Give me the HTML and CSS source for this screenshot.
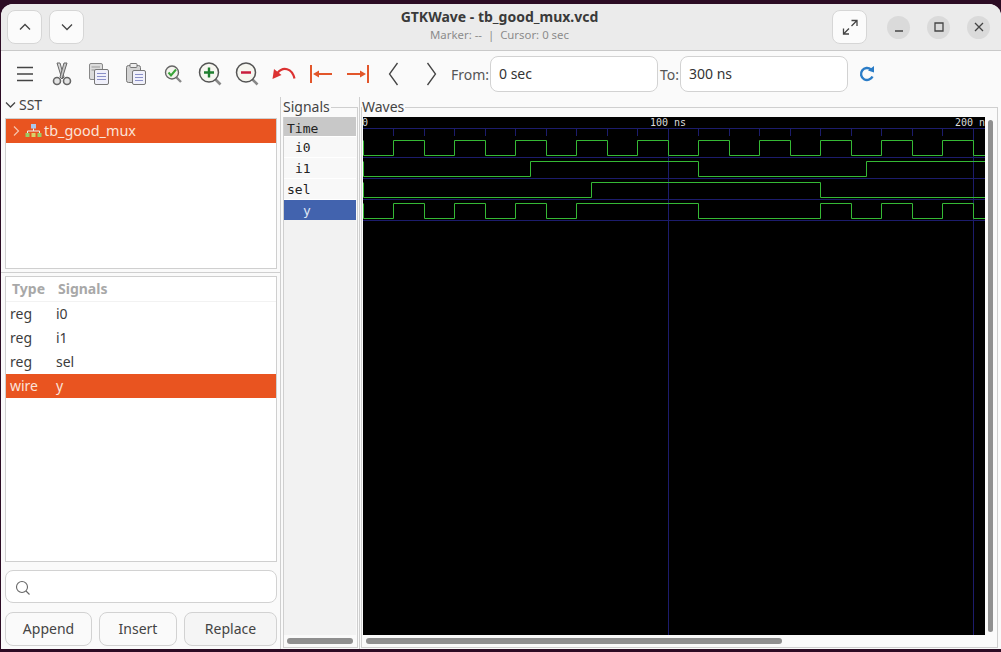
FILE: index.html

```html
<!DOCTYPE html>
<html>
<head>
  <title>GTKWave - tb_good_mux.vcd</title>
  <link rel="stylesheet" href="styles.css">
</head>
<body>
  <div class="window">
    <!-- title bar -->
    <header class="titlebar">
      <div class="title-left">
        <button class="head-btn">
          <svg width="14" height="14" viewBox="0 0 14 14"><path class="line" d="M2 9.5 L7 4.5 L12 9.5"/></svg>
        </button>
        <button class="head-btn">
          <svg width="14" height="14" viewBox="0 0 14 14"><path class="line" d="M2 4.5 L7 9.5 L12 4.5"/></svg>
        </button>
      </div>
      <div class="title-center">
        <div class="title-main">GTKWave - tb_good_mux.vcd</div>
        <div class="title-sub">Marker: -- &nbsp;|&nbsp; Cursor: 0 sec</div>
      </div>
      <div class="title-right">
        <button class="head-btn expand-btn">
          <svg width="18" height="18" viewBox="0 0 18 18"><path class="line" d="M10.5 2.5 H16 V8 M16 2.5 L10.5 8 M2.5 10.5 V16 H8 M2.5 16 L8 10.5"/></svg>
        </button>
        <div class="win-btn">
          <svg width="12" height="12" viewBox="0 0 12 12"><path class="line" d="M2 10 H10"/></svg>
        </div>
        <div class="win-btn">
          <svg width="12" height="12" viewBox="0 0 12 12"><path class="line" d="M2 2 H10 V10 H2 Z"/></svg>
        </div>
        <div class="win-btn">
          <svg width="12" height="12" viewBox="0 0 12 12"><path class="line" d="M2 2 L10 10 M10 2 L2 10"/></svg>
        </div>
      </div>
    </header>

    <!-- toolbar -->
    <div class="toolbar">
      <div class="tool">
        <svg width="24" height="24" viewBox="0 0 24 24"><path class="line" d="M4 5.5 H20 M4 12 H20 M4 18.5 H20"/></svg>
      </div>
      <div class="tool">
        <svg width="24" height="24" viewBox="0 0 24 24">
          <path d="M7 1 L10 1 L14 15 L12 17 Z" fill="#d8d8d8" stroke="#666"/>
          <path d="M17 1 L14 1 L10 15 L12 17 Z" fill="#c8c8c8" stroke="#666"/>
          <circle cx="7" cy="19" r="3.5" fill="#e4e4e4" stroke="#666" stroke-width="1.6"/>
          <circle cx="17" cy="19" r="3.5" fill="#e4e4e4" stroke="#666" stroke-width="1.6"/>
        </svg>
      </div>
      <div class="tool">
        <svg width="24" height="24" viewBox="0 0 24 24">
          <rect x="2.5" y="1.5" width="13" height="16" rx="1.5" fill="#dcdcdc" stroke="#888"/>
          <path d="M4.5 5 H13 M4.5 8 H8" stroke="#999"/>
          <rect x="7.5" y="7.5" width="14" height="15" rx="1.5" fill="#f0f0fa" stroke="#777"/>
          <path d="M10 11.5 H19 M10 14.5 H19 M10 17.5 H19" stroke="#8a90c8"/>
        </svg>
      </div>
      <div class="tool">
        <svg width="24" height="24" viewBox="0 0 24 24">
          <rect x="2.5" y="3.5" width="14" height="17" rx="2" fill="#d4d4d4" stroke="#777"/>
          <rect x="6" y="1.5" width="7" height="4" rx="1" fill="#eee" stroke="#777"/>
          <rect x="8.5" y="8.5" width="13" height="14" rx="1.5" fill="#f0f0fa" stroke="#777"/>
          <path d="M11 12.5 H19 M11 15.5 H19 M11 18.5 H19" stroke="#8a90c8"/>
        </svg>
      </div>
      <div class="tool">
        <svg width="24" height="24" viewBox="0 0 24 24">
          <path d="M15.5 15.5 L20 20" stroke="#888" stroke-width="2.4"/>
          <circle cx="11" cy="10.5" r="6.5" fill="#f4f4ee" stroke="#666" stroke-width="1.4"/>
          <path d="M7.5 10.5 L10 13.5 L15 7.5" fill="none" stroke="#3aa53a" stroke-width="2"/>
        </svg>
      </div>
      <div class="tool">
        <svg width="24" height="24" viewBox="0 0 24 24">
          <path d="M17 17 L22.5 22.5" stroke="#888" stroke-width="2.6"/>
          <circle cx="11" cy="10.5" r="9.5" fill="#f6f6f0" stroke="#555" stroke-width="1.5"/>
          <path d="M11 5.5 V15.5 M6 10.5 H16" stroke="#1f7f2f" stroke-width="2.4"/>
        </svg>
      </div>
      <div class="tool">
        <svg width="24" height="24" viewBox="0 0 24 24">
          <path d="M17 17 L22.5 22.5" stroke="#888" stroke-width="2.6"/>
          <circle cx="11" cy="10.5" r="9.5" fill="#f6f6f0" stroke="#555" stroke-width="1.5"/>
          <path d="M6 10.5 H16" stroke="#c81e3c" stroke-width="2.4"/>
        </svg>
      </div>
      <div class="tool">
        <svg width="24" height="24" viewBox="0 0 24 24">
          <path d="M22.5 16.5 C20 6 11 4 5.5 11" fill="none" stroke="#dc3232" stroke-width="2.2"/>
          <path d="M0.5 17 L2 7 L9.5 13 Z" fill="#dc3232"/>
        </svg>
      </div>
      <div class="tool">
        <svg width="24" height="24" viewBox="0 0 24 24">
          <path d="M2 3 V21" stroke="#e2562a" stroke-width="2"/>
          <path d="M8 12 H23" stroke="#e2562a" stroke-width="2"/>
          <path d="M4 12 L10 8.5 V15.5 Z" fill="#e2562a"/>
        </svg>
      </div>
      <div class="tool">
        <svg width="24" height="24" viewBox="0 0 24 24">
          <path d="M22 3 V21" stroke="#e2562a" stroke-width="2"/>
          <path d="M1 12 H16" stroke="#e2562a" stroke-width="2"/>
          <path d="M20 12 L14 8.5 V15.5 Z" fill="#e2562a"/>
        </svg>
      </div>
      <div class="tool">
        <svg width="24" height="24" viewBox="0 0 24 24"><path class="line" d="M14.5 1 L6.5 12 L14.5 23"/></svg>
      </div>
      <div class="tool">
        <svg width="24" height="24" viewBox="0 0 24 24"><path class="line" d="M7.5 1 L15.5 12 L7.5 23"/></svg>
      </div>
      <span class="range-label from-label">From:</span>
      <div class="range-input">0 sec</div>
      <span class="range-label to-label">To:</span>
      <div class="range-input">300 ns</div>
      <div class="reload">
        <svg width="18" height="18" viewBox="0 0 18 18">
          <path d="M14.5 11.5 A6 6 0 1 1 13 4.5" fill="none" stroke="#2a7cc7" stroke-width="2.4"/>
          <path d="M10 5.5 L16 7.5 L16 1 Z" fill="#2a7cc7"/>
        </svg>
      </div>
    </div>

    <div class="main">
      <!-- left pane -->
      <div class="left">
        <div class="sst-label">
          <svg width="11" height="11" viewBox="0 0 11 11"><path class="line" d="M1 3.5 L5.5 8 L10 3.5"/></svg>
          <span>SST</span>
        </div>
        <div class="tree-box">
          <div class="tree-row">
            <svg width="10" height="12" viewBox="0 0 10 12"><path d="M3 1.5 L7.5 6 L3 10.5" fill="none" stroke="#f6c4ae" stroke-width="1.2"/></svg>
            <svg class="tree-icon" width="17" height="14" viewBox="0 0 17 14">
              <rect x="6" y="0" width="5" height="4.5" fill="#a9c8ec"/>
              <path d="M8.5 4.5 V7 M2.5 9 V7 H14.5 V9" fill="none" stroke="#eee"/>
              <rect x="0.5" y="9" width="4" height="4" fill="#9ccc65"/>
              <rect x="6.5" y="9" width="4" height="4" fill="#d9d36a"/>
              <rect x="12.5" y="9" width="4" height="4" fill="#9ccc65"/>
            </svg>
            <span>tb_good_mux</span>
          </div>
        </div>
        <div class="pane-line"></div>
        <div class="signal-box">
          <div class="signal-head">
            <span class="col-type">Type</span>
            <span class="col-name">Signals</span>
          </div>
          <div class="signal-row"><span class="col-type">reg</span><span class="col-name">i0</span></div>
          <div class="signal-row"><span class="col-type">reg</span><span class="col-name">i1</span></div>
          <div class="signal-row"><span class="col-type">reg</span><span class="col-name">sel</span></div>
          <div class="signal-row selected"><span class="col-type">wire</span><span class="col-name">y</span></div>
        </div>
        <div class="search">
          <svg width="16" height="16" viewBox="0 0 16 16">
            <circle cx="7" cy="7" r="5.5" fill="none" stroke="#666" stroke-width="1.1"/>
            <path d="M11 11 L14.5 14.5" stroke="#666" stroke-width="1.1"/>
          </svg>
        </div>
        <div class="actions">
          <button class="action append">Append</button>
          <button class="action insert">Insert</button>
          <button class="action replace">Replace</button>
        </div>
      </div>

      <!-- signal names -->
      <fieldset class="frame signals-frame">
        <legend>Signals</legend>
        <div class="signals-inner">
          <div class="names">
            <div class="name name-time">Time</div>
            <div class="name indent-1">i0</div>
            <div class="name indent-1">i1</div>
            <div class="name">sel</div>
            <div class="name name-selected indent-2">y</div>
          </div>
          <div class="hscroll names-scroll"></div>
        </div>
      </fieldset>

      <div class="pane-divider"></div>

      <!-- waveforms -->
      <fieldset class="frame waves-frame">
        <legend>Waves</legend>
        <div class="waves-inner">
          <div class="waves-top">
            <svg class="canvas" width="622" height="518" viewBox="0 0 622 518">
              <g class="grid">
                <path d="M0 11.5 H622 M0 40.5 H622 M0 61.5 H622 M0 82.5 H622 M0 103.5 H622"/>
                <path d="M305.5 11 V518 M610.5 11 V518"/>
                <path d="M30.5 11 V19 M61.5 11 V19 M91.5 11 V19 M122.5 11 V19 M152.5 11 V19 M183.5 11 V19 M213.5 11 V19 M244.5 11 V19 M274.5 11 V19 M335.5 11 V19 M366.5 11 V19 M396.5 11 V19 M427.5 11 V19 M457.5 11 V19 M488.5 11 V19 M518.5 11 V19 M549.5 11 V19 M579.5 11 V19"/>
              </g>
              <g class="trace">
                <path d="M0.5 23.5 V38.5 H30.5 V23.5 H61.5 V38.5 H91.5 V23.5 H122.5 V38.5 H152.5 V23.5 H183.5 V38.5 H213.5 V23.5 H244.5 V38.5 H274.5 V23.5 H305.5 V38.5 H335.5 V23.5 H366.5 V38.5 H396.5 V23.5 H427.5 V38.5 H457.5 V23.5 H488.5 V38.5 H518.5 V23.5 H549.5 V38.5 H579.5 V23.5 H610.5 V38.5 H622"/>
                <path d="M0.5 44.5 V59.5 H167.5 V44.5 H335.5 V59.5 H503.5 V44.5 H622"/>
                <path d="M0.5 65.5 V80.5 H228.5 V65.5 H457.5 V80.5 H622"/>
                <path d="M0.5 86.5 V101.5 H30.5 V86.5 H61.5 V101.5 H91.5 V86.5 H122.5 V101.5 H152.5 V86.5 H183.5 V101.5 H213.5 V86.5 H335.5 V101.5 H457.5 V86.5 H488.5 V101.5 H518.5 V86.5 H549.5 V101.5 H579.5 V86.5 H610.5 V101.5 H622"/>
              </g>
              <g class="ticks">
                <text x="-1" y="9">0</text>
                <text x="287" y="9">100 ns</text>
                <text x="592" y="9">200 n</text>
              </g>
            </svg>
            <div class="vtrack"><div class="vthumb"></div></div>
          </div>
          <div class="hscroll waves-scroll"></div>
        </div>
      </fieldset>
    </div>
  </div>
</body>
</html>
```

FILE: styles.css

```css
* {
  box-sizing: border-box;
}

html, body {
  margin: 0;
  height: 652px;
  overflow: hidden;
}

body {
  background: #2c0c24;
  font-family: "Noto Sans", sans-serif;
  color: #3d3d3d;
}

button {
  font-family: inherit;
  padding: 0;
}

.line {
  fill: none;
  stroke: #444;
  stroke-width: 1.3;
}

.window {
  margin: 4px 0 0 1px;
  height: 645px;
  background: #fafafa;
  border-radius: 12px 12px 0 0;
  display: flex;
  flex-direction: column;
  overflow: hidden;
}

/* title bar */
.titlebar {
  height: 47px;
  flex: none;
  background: #ebebeb;
  border-bottom: 1px solid #c9c9c9;
  display: grid;
  grid-template-columns: 1fr auto 1fr;
  align-items: center;
  padding: 0 11px 0 6px;
}

.title-left {
  display: flex;
  gap: 7px;
}

.title-center {
  text-align: center;
  margin: 0 0 5px 2px;
}

.title-main {
  font-size: 14px;
  font-weight: 700;
  line-height: 20px;
  color: #3a3a3a;
}

.title-sub {
  font-size: 11.4px;
  line-height: 15px;
  color: #8c8c8c;
}

.title-right {
  display: flex;
  justify-content: flex-end;
  align-items: center;
  gap: 17px;
}

.head-btn {
  width: 35px;
  height: 34px;
  background: #fbfbfb;
  border: 1px solid #d6d6d6;
  border-radius: 8px;
  display: flex;
  align-items: center;
  justify-content: center;
}

.expand-btn {
  margin-right: 3px;
}

.win-btn {
  width: 23px;
  height: 23px;
  border-radius: 50%;
  background: #dadada;
  display: flex;
  align-items: center;
  justify-content: center;
}

/* toolbar */
.toolbar {
  height: 46px;
  flex: none;
  display: flex;
  align-items: center;
  padding-left: 5px;
  font-size: 14px;
}

.tool {
  width: 37px;
  height: 24px;
  display: flex;
  justify-content: center;
}

.range-label {
  color: #555;
}

.from-label {
  width: 40px;
  padding-left: 1px;
}

.to-label {
  width: 22px;
  padding-left: 2px;
}

.range-input {
  width: 168px;
  height: 36px;
  background: #fff;
  border: 1px solid #d2d2d2;
  border-radius: 8px;
  line-height: 34px;
  padding-left: 8px;
  font-size: 14px;
  color: #333;
}

.reload {
  margin-left: 10px;
  height: 18px;
}

.main {
  flex: 1;
  display: flex;
  min-height: 0;
  height: 551px;
}

/* left pane */
.left {
  width: 280px;
  flex: none;
  padding: 0 3px 2px 4px;
  border-right: 1px solid #cfcfcf;
  display: flex;
  flex-direction: column;
}

.sst-label {
  height: 21px;
  padding-bottom: 7px;
  display: flex;
  align-items: center;
  gap: 3px;
  font-size: 14px;
  color: #444;
}

.tree-box {
  height: 151px;
  background: #fff;
  border: 1px solid #cfcfcf;
  padding-top: 0;
}

.tree-row {
  height: 24px;
  background: #e95420;
  color: #fbe3d8;
  display: flex;
  align-items: center;
  padding: 0 0 1px 5px;
  font-size: 14.4px;
}

.tree-icon {
  margin: 0 2px 0 4px;
}

.pane-line {
  height: 1px;
  background: #cfcfcf;
  margin: 3px -3px 3px -4px;
}

.signal-box {
  height: 286px;
  background: #fff;
  border: 1px solid #cfcfcf;
}

.signal-head,
.signal-row {
  display: flex;
  height: 24px;
  line-height: 24px;
  font-size: 14px;
  padding-left: 4px;
}

.signal-head {
  height: 25px;
  font-weight: 700;
  color: #a8a8a8;
  border-bottom: 1px solid #f2f2f2;
}

.signal-head .col-type {
  padding-left: 2px;
}

.signal-head .col-name {
  padding-left: 2px;
}

.col-type {
  width: 46px;
}

.selected {
  background: #e95420;
  color: #fbe3d8;
}

.search {
  height: 33px;
  margin-top: 8px;
  background: #fff;
  border: 1px solid #d2d2d2;
  border-radius: 8px;
  padding: 8px 0 0 9px;
}

.actions {
  display: flex;
  justify-content: space-between;
  margin-top: 9px;
}

.action {
  height: 34px;
  background: #fafafa;
  border: 1px solid #d2d2d2;
  border-radius: 8px;
  padding-bottom: 2px;
  font-size: 14px;
  color: #444;
}

.append {
  width: 87px;
}

.insert {
  width: 78px;
}

.replace {
  width: 93px;
  background: #f5f5f5;
}

/* frames */
.frame {
  margin: 0;
  padding: 0;
  min-width: 0;
  border: 1px solid #cfcfcf;
  flex: none;
}

.frame legend {
  padding: 0 1px 0 0;
  margin-left: -1px;
  font-size: 14px;
  line-height: 20px;
  height: 20px;
  color: #444;
}

.signals-frame {
  width: 75px;
  margin: 0 0 1px 2px;
}

.pane-divider {
  width: 1px;
  margin: 0 1px;
  background: #cfcfcf;
}

.waves-frame {
  width: 637px;
  margin: 0 0 1px 0;
}

.waves-frame legend {
  margin-left: 0;
}

.signals-inner,
.waves-inner {
  height: 530px;
  display: flex;
  flex-direction: column;
}

.signals-inner {
  padding-right: 1px;
}

.names {
  height: 518px;
  background: #f2f2f2;
  font-family: "DejaVu Sans Mono", monospace;
  font-size: 13px;
  color: #222;
}

.name {
  height: 21px;
  line-height: 21px;
  padding-left: 3px;
  background: #f8f8f8;
  border-bottom: 1px solid #fff;
}

.name-time {
  height: 20px;
  line-height: 24px;
  background: #c8c8c8;
}

.indent-1 {
  padding-left: 11px;
}

.indent-2 {
  padding-left: 19px;
}

.name-selected {
  height: 20px;
  background: #4263ae;
  color: #dfe6f5;
  border-bottom: 0;
}

.hscroll {
  height: 6px;
  margin-top: 3px;
  background: #8f8f8f;
  border-radius: 3px;
}

.names-scroll {
  margin-left: 3px;
  width: 66px;
}

.waves-top {
  display: flex;
  padding-left: 1px;
  height: 518px;
}

.canvas {
  background: #000;
  display: block;
  flex: none;
}

.grid path {
  fill: none;
  stroke: #1c1c6c;
  stroke-width: 1;
}

.trace path {
  fill: none;
  stroke: #35b935;
  stroke-width: 1;
}

.ticks text {
  font-family: "DejaVu Sans Mono", monospace;
  font-size: 10px;
  fill: #dcdcdc;
}

.vtrack {
  width: 11px;
  padding: 3px 0 3px 3px;
}

.vthumb {
  width: 5px;
  height: 100%;
  background: #8f8f8f;
  border-radius: 3px;
}

.waves-scroll {
  margin-left: 4px;
  width: 416px;
}
```
